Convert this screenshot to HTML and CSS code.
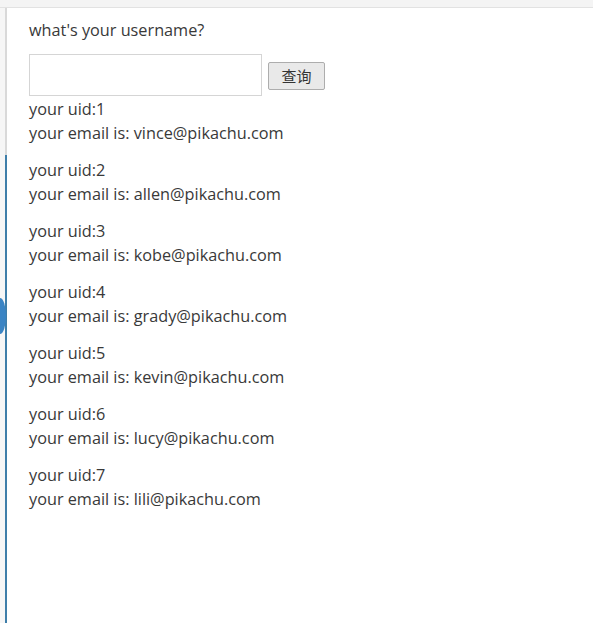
FILE: index.html
```html
<!DOCTYPE html>
<html>
<head>
<meta charset="utf-8">
<link rel="stylesheet" href="styles.css">
</head>
<body>
<div class="topbar"></div>
<div class="main">
  <div class="sidebar">
    <div class="rail-top"></div>
    <div class="rail-bottom"></div>
    <div class="toggle"></div>
  </div>
  <div class="content">
    <p class="label">what's your username?</p>
    <form class="query">
      <input class="name" type="text">
      <button class="submit" type="button">查询</button>
    </form>
    <div class="results">
      <p class="row">your uid:1<br>your email is: vince@pikachu.com</p>
      <p class="row">your uid:2<br>your email is: allen@pikachu.com</p>
      <p class="row">your uid:3<br>your email is: kobe@pikachu.com</p>
      <p class="row">your uid:4<br>your email is: grady@pikachu.com</p>
      <p class="row">your uid:5<br>your email is: kevin@pikachu.com</p>
      <p class="row">your uid:6<br>your email is: lucy@pikachu.com</p>
      <p class="row">your uid:7<br>your email is: lili@pikachu.com</p>
    </div>
  </div>
</div>
</body>
</html>
```
FILE: styles.css
```css
html, body {
  margin: 0;
  padding: 0;
  background: #fff;
  height: 100%;
  overflow: hidden;
}
body {
  font-family: "Open Sans", "Noto Sans CJK SC", sans-serif;
  font-size: 16.25px;
  color: #393939;
}
.topbar {
  height: 7px;
  background: #f4f4f4;
  border-bottom: 1px solid #e2e2e2;
}
.main {
  display: flex;
  height: 615px;
}
.sidebar {
  position: relative;
  width: 5px;
  background: #f6f6f6;
  border-right: 2px solid #d9d9d9;
  display: flex;
  flex-direction: column;
}
.rail-top { height: 147px; }
.rail-bottom {
  flex: 1;
  margin-right: -2px;
  border-right: 2px solid #3e7ea9;
}
.toggle {
  position: absolute;
  left: -6px;
  top: 290px;
  width: 12px;
  height: 36px;
  background: #3a84c4;
  border-radius: 50%;
}
.content {
  padding-left: 22px;
  flex: 1;
}
.label {
  margin: 11px 0 0;
  line-height: 22px;
}
.query {
  margin: 13px 0 0;
  display: flex;
  align-items: center;
  gap: 6px;
}
.name {
  width: 233px;
  height: 42px;
  margin: 0;
  padding: 0;
  border: 1px solid #d5d5d5;
  box-sizing: border-box;
}
.submit {
  font-family: "Noto Sans CJK SC", sans-serif;
  font-size: 15px;
  color: #333;
  background: #e9e9e9;
  border: 1px solid #adadad;
  border-radius: 2px;
  width: 57px;
  height: 28px;
  padding: 0;
  margin-top: 1px;
}
.results {
  margin-top: 1px;
}
.row {
  margin: 0 0 13px;
  line-height: 24px;
}
```
